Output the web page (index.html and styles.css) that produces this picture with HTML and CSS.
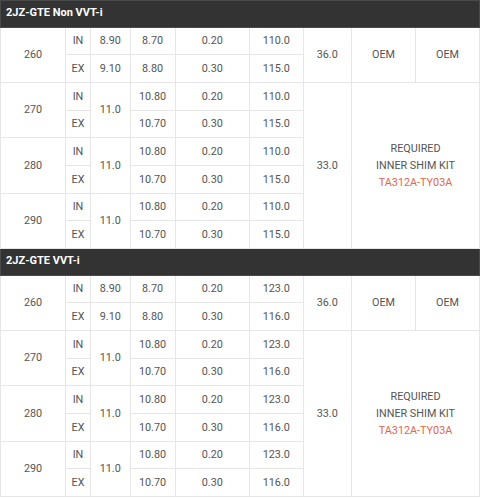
FILE: index.html
```html
<!DOCTYPE html>
<html>
<head>
<meta charset="utf-8">
<link rel="stylesheet" href="styles.css">
</head>
<body>
<table class="spec">
  <colgroup>
    <col class="c-dur"><col class="c-side"><col class="c-base"><col class="c-shim"><col class="c-clr"><col class="c-lift"><col class="c-spr"><col class="c-a"><col class="c-b">
  </colgroup>
  <tbody>
    <tr class="head"><td colspan="9">2JZ-GTE Non VVT-i</td></tr>
    <tr><td rowspan="2">260</td><td>IN</td><td>8.90</td><td>8.70</td><td>0.20</td><td>110.0</td><td rowspan="2">36.0</td><td rowspan="2">OEM</td><td rowspan="2">OEM</td></tr>
    <tr><td>EX</td><td>9.10</td><td>8.80</td><td>0.30</td><td>115.0</td></tr>
    <tr><td rowspan="2">270</td><td>IN</td><td rowspan="2">11.0</td><td>10.80</td><td>0.20</td><td>110.0</td><td rowspan="6">33.0</td><td rowspan="6" colspan="2" class="note">REQUIRED<br>INNER SHIM KIT<br><span class="kit">TA312A-TY03A</span></td></tr>
    <tr><td>EX</td><td>10.70</td><td>0.30</td><td>115.0</td></tr>
    <tr><td rowspan="2">280</td><td>IN</td><td rowspan="2">11.0</td><td>10.80</td><td>0.20</td><td>110.0</td></tr>
    <tr><td>EX</td><td>10.70</td><td>0.30</td><td>115.0</td></tr>
    <tr><td rowspan="2">290</td><td>IN</td><td rowspan="2">11.0</td><td>10.80</td><td>0.20</td><td>110.0</td></tr>
    <tr><td>EX</td><td>10.70</td><td>0.30</td><td>115.0</td></tr>

    <tr class="head"><td colspan="9">2JZ-GTE VVT-i</td></tr>
    <tr><td rowspan="2">260</td><td>IN</td><td>8.90</td><td>8.70</td><td>0.20</td><td>123.0</td><td rowspan="2">36.0</td><td rowspan="2">OEM</td><td rowspan="2">OEM</td></tr>
    <tr><td>EX</td><td>9.10</td><td>8.80</td><td>0.30</td><td>116.0</td></tr>
    <tr><td rowspan="2">270</td><td>IN</td><td rowspan="2">11.0</td><td>10.80</td><td>0.20</td><td>123.0</td><td rowspan="6">33.0</td><td rowspan="6" colspan="2" class="note">REQUIRED<br>INNER SHIM KIT<br><span class="kit">TA312A-TY03A</span></td></tr>
    <tr><td>EX</td><td>10.70</td><td>0.30</td><td>116.0</td></tr>
    <tr><td rowspan="2">280</td><td>IN</td><td rowspan="2">11.0</td><td>10.80</td><td>0.20</td><td>123.0</td></tr>
    <tr><td>EX</td><td>10.70</td><td>0.30</td><td>116.0</td></tr>
    <tr><td rowspan="2">290</td><td>IN</td><td rowspan="2">11.0</td><td>10.80</td><td>0.20</td><td>123.0</td></tr>
    <tr><td>EX</td><td>10.70</td><td>0.30</td><td>116.0</td></tr>
  </tbody>
</table>
</body>
</html>
```
FILE: styles.css
```css
html, body {
  margin: 0;
  padding: 0;
  background: #ffffff;
}
.spec {
  width: 479px;
  border-collapse: collapse;
  table-layout: fixed;
  font-family: Roboto, "Liberation Sans", sans-serif;
  font-size: 10.8px;
  color: #555555;
}
.c-dur { width: 65px; }
.c-side { width: 25px; }
.c-base { width: 39.5px; }
.c-shim { width: 45px; }
.c-clr { width: 74.5px; }
.c-lift { width: 53.5px; }
.c-spr { width: 48.5px; }
.c-a { width: 64px; }
.c-b { width: 64px; }
.spec td {
  border: 1px solid #e6e6e6;
  text-align: center;
  vertical-align: middle;
  padding: 1.5px 0 0;
  height: 25.2px;
  line-height: 16.8px;
}
.spec tr.head td {
  background: #333333;
  border: 1px solid #4a4a4a;
  color: #ffffff;
  font-weight: 700;
  font-size: 11px;
  text-align: left;
  padding: 0 0 0 5px;
  height: 25.5px;
}
.note {
  color: #555555;
}
.kit {
  color: #e8654a;
}
```
